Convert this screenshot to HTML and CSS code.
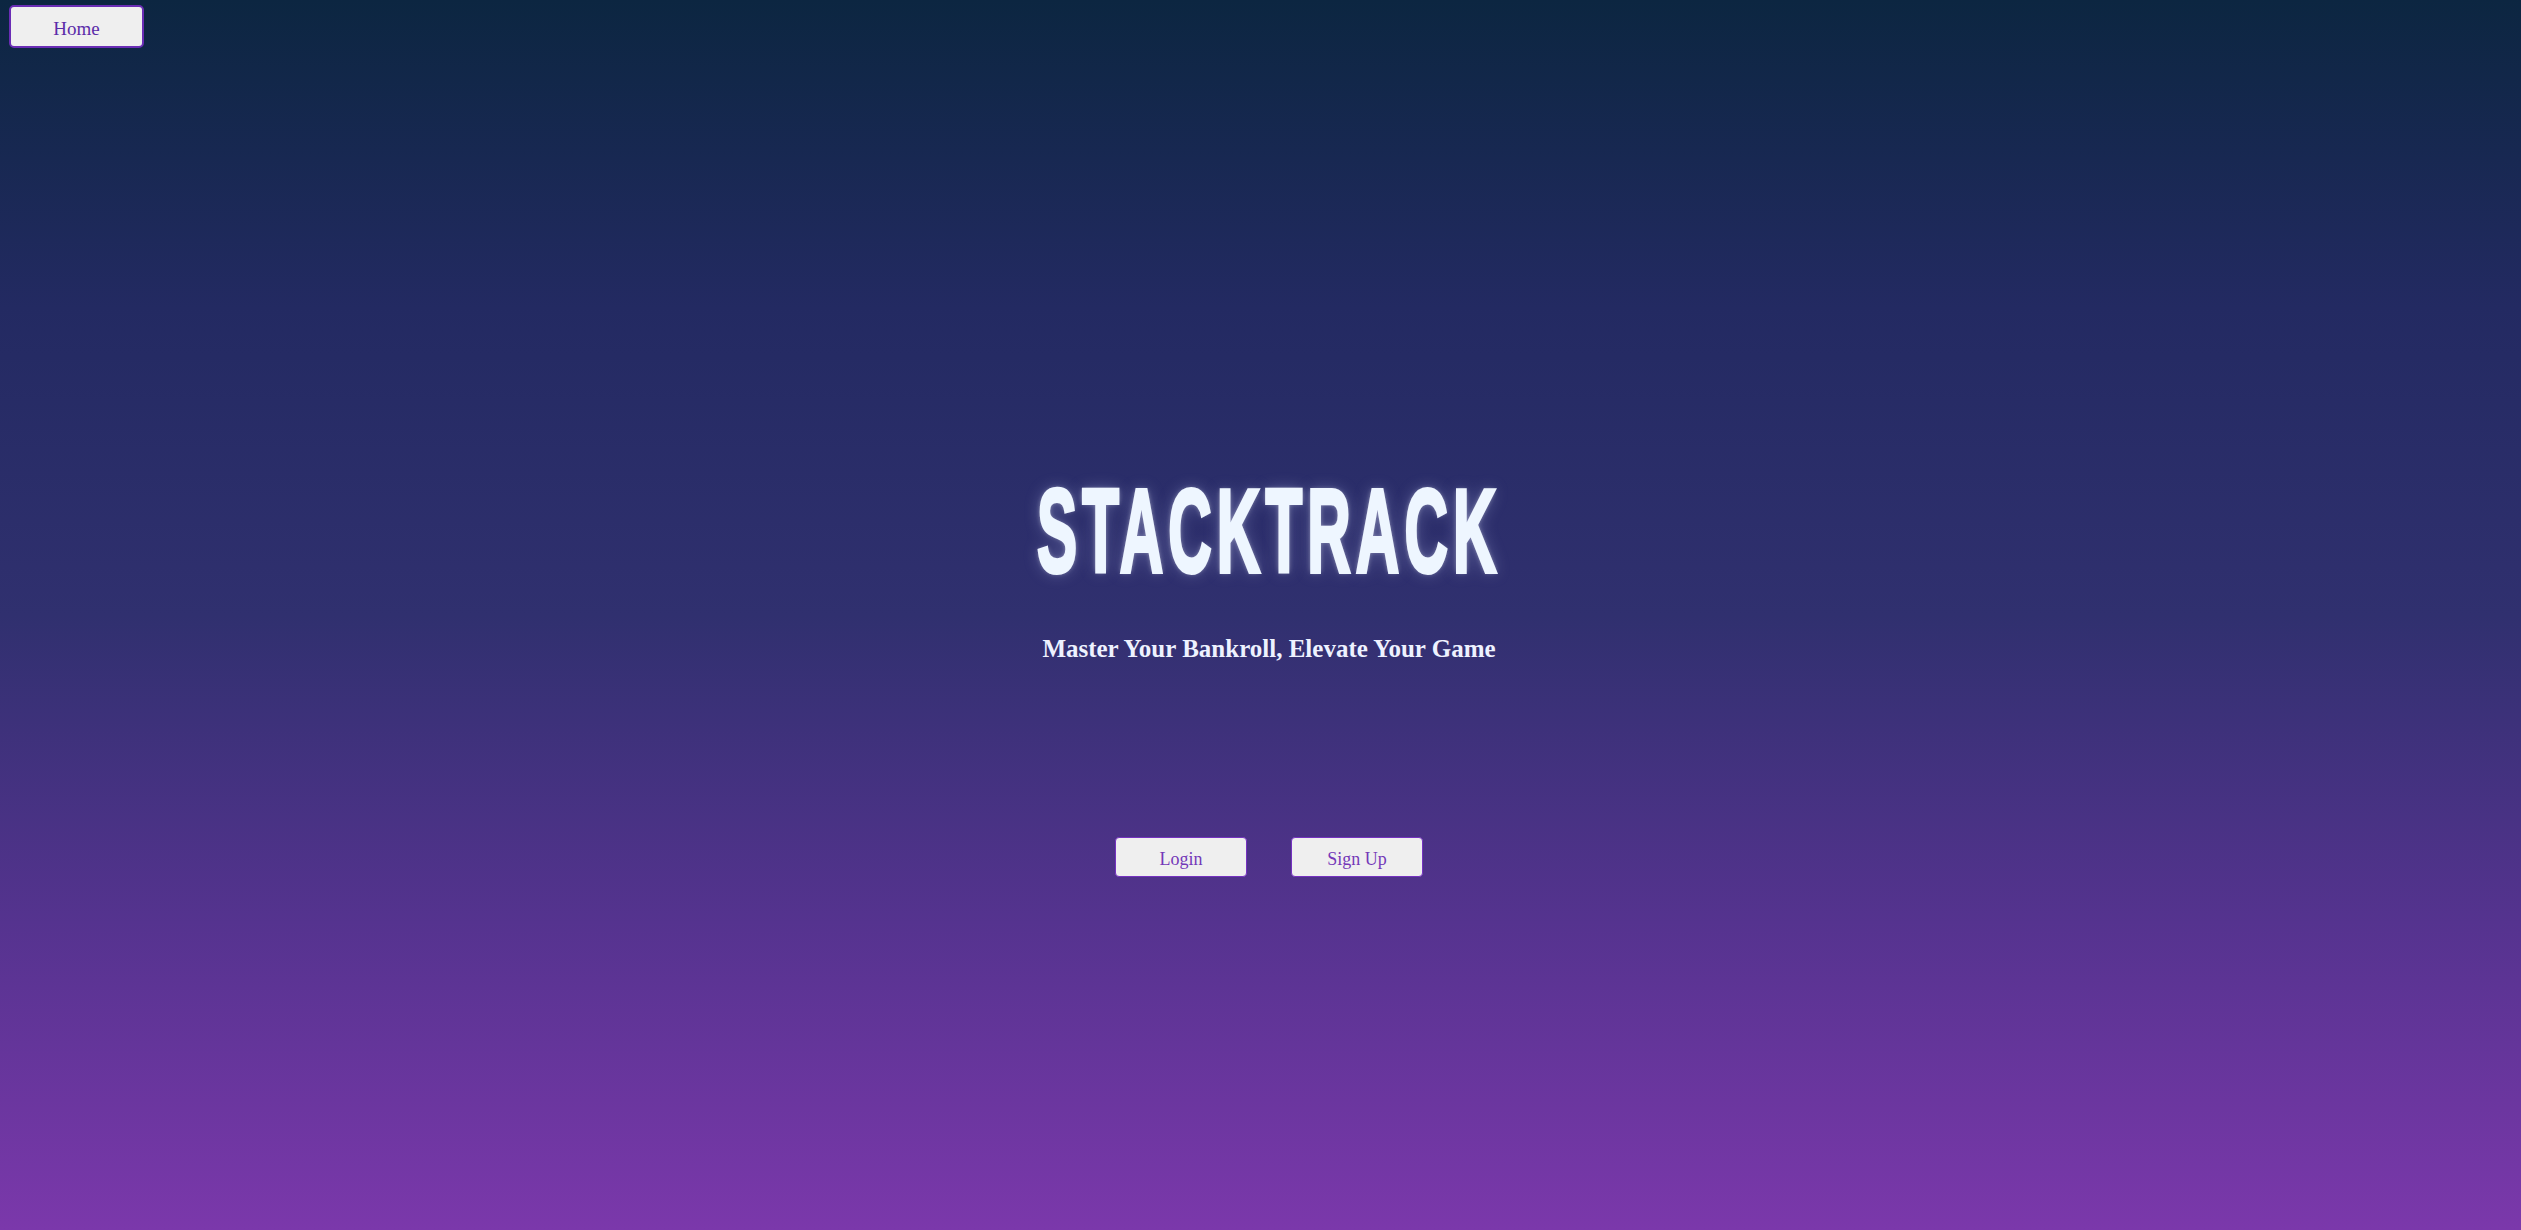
FILE: index.html
```html
<!DOCTYPE html>
<html lang="en">
<head>
<meta charset="utf-8">
<title>StackTrack</title>
<link rel="stylesheet" href="styles.css">
</head>
<body>
<nav class="nav">
  <button class="home-btn">Home</button>
</nav>
<main class="hero">
  <h1 class="title"><span class="title-text">STACKTRACK</span></h1>
  <p class="tagline">Master Your Bankroll, Elevate Your Game</p>
  <div class="actions">
    <button class="action-btn">Login</button>
    <button class="action-btn">Sign Up</button>
  </div>
</main>
</body>
</html>
```
FILE: styles.css
```css
html, body {
  margin: 0;
  padding: 0;
  height: 100%;
}
body {
  min-height: 100vh;
  background: linear-gradient(to bottom, #0c2641 0%, #232a62 25%, #30306f 50%, #55338f 75%, #7b38ab 100%);
  font-family: "Liberation Serif", "DejaVu Serif", serif;
  overflow: hidden;
}
.nav {
  display: flex;
  padding: 5px 9px 0;
}
.home-btn {
  width: 135px;
  height: 43px;
  box-sizing: border-box;
  background: #efefef;
  border: 2px solid #6a2db5;
  border-radius: 5px;
  color: #5b2ca9;
  font-family: "Liberation Serif", "DejaVu Serif", serif;
  font-size: 19px;
  padding: 4px 0 0;
  cursor: pointer;
}
.hero {
  display: flex;
  flex-direction: column;
  align-items: center;
  padding-left: 17px;
  padding-top: 423px;
}
.title {
  margin: 0;
  height: 120px;
  line-height: 120px;
  font-size: 118px;
  font-family: "Liberation Sans Narrow", "Liberation Sans", "DejaVu Sans Condensed", sans-serif;
  font-weight: 700;
  color: #eef6ff;
}
.title-text {
  display: inline-block;
  letter-spacing: 10px;
  transform: scaleX(0.51);
  -webkit-text-stroke: 4px #eef6ff;
  text-shadow: 0 0 8px rgba(255, 255, 255, 0.55), 0 0 22px rgba(200, 210, 255, 0.35);
}
.tagline {
  margin: 43px 0 0;
  font-size: 25px;
  line-height: 30px;
  font-weight: 700;
  color: #eef2ff;
}
.actions {
  display: flex;
  gap: 44px;
  margin-top: 173px;
}
.action-btn {
  width: 132px;
  height: 40px;
  box-sizing: border-box;
  background: #efefef;
  border: 1px solid #7532c0;
  border-radius: 4px;
  color: #7438b8;
  font-family: "Liberation Serif", "DejaVu Serif", serif;
  font-size: 18px;
  padding: 4px 0 0;
  cursor: pointer;
}
```
